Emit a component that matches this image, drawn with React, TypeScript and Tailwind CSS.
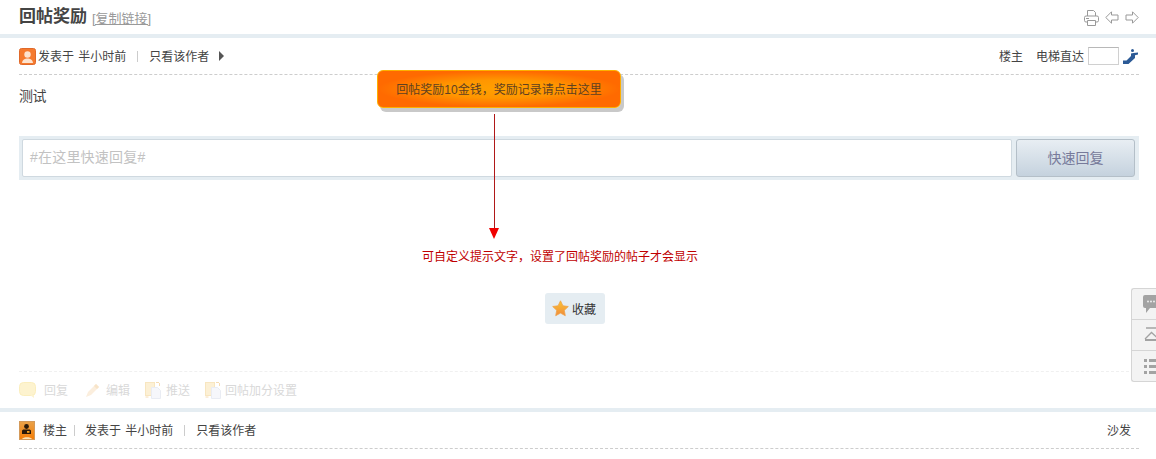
import React from "react";

const FONT = "font-['Liberation_Sans','Noto_Sans_CJK_SC',sans-serif]";

function UserIcon() {
  return (
    <svg width="17" height="17" viewBox="0 0 17 17" className="shrink-0">
      <rect x="0.5" y="0.5" width="16" height="16" rx="2" fill="#f57a2e" stroke="#e0692a" />
      <circle cx="8.5" cy="6.5" r="3.2" fill="#fde3cf" />
      <path d="M3 15c.5-3.5 3-4.5 5.500-4.500S13.500 11.500 14 15z" fill="#fde3cf" />
    </svg>
  );
}

function OwnerIcon() {
  return (
    <svg width="16" height="19" viewBox="0 0 16 19" className="shrink-0">
      <defs>
        <linearGradient id="owner" x1="0" y1="0" x2="0" y2="1">
          <stop offset="0" stopColor="#e9a24a" />
          <stop offset="1" stopColor="#f57d05" />
        </linearGradient>
      </defs>
      <rect x="0.5" y="0.5" width="15" height="18" fill="url(#owner)" stroke="#d49a5a" />
      <circle cx="7.500" cy="5.500" r="2.400" fill="#2a1a0a" />
      <path d="M3 13V10c0-1 1-1.500 2-1.500h5c1 0 2 .5 2 1.500v3z" fill="#2a1a0a" />
      <rect x="8" y="10" width="2.500" height="1.800" fill="#f5a020" />
      <path d="M3 18c1-2.500 9-2.500 10 0z" fill="#fbe3b8" />
    </svg>
  );
}

function ActionIcon({ kind }: { kind: "bubble" | "pen" | "doc" }) {
  if (kind === "bubble") {
    return (
      <svg width="17" height="17" viewBox="0 0 17 17">
        <rect x="0.500" y="0.500" width="16" height="13" rx="4" fill="#fdf3cf" stroke="#fbeebd" />
        <path d="M11 13l4 3v-3z" fill="#fdf3cf" />
      </svg>
    );
  }
  if (kind === "pen") {
    return (
      <svg width="16" height="16" viewBox="0 0 16 16">
        <path d="M1 15l2-5L11 2l3 3-8 8z" fill="#fbeedd" />
        <path d="M11 2l3 3-2 2-3-3z" fill="#f8e4c8" />
      </svg>
    );
  }
  return (
    <svg width="16" height="17" viewBox="0 0 16 17">
      <rect x="0.500" y="0.500" width="9" height="13" fill="#fcf0d5" stroke="#f8e6c0" />
      <path d="M6.500 5.500h6l3 3v8h-9z" fill="#f6f7fb" stroke="#e9ecf3" />
      <path d="M11 0.500h3M14.500 1v3M0.500 15h3" stroke="#f6dcb4" fill="none" />
    </svg>
  );
}

function SideTool() {
  return (
    <div className="absolute right-0 top-[288px] w-[25px] h-[94px] bg-[#f3f3f3] border border-r-0 border-[#d5d5d5] rounded-l-[3px] flex flex-col overflow-hidden">
      <div className="h-[31px] border-b border-[#d5d5d5] pl-[11px] pt-[6px]">
        <svg width="14" height="20" viewBox="0 0 14 20">
          <path d="M2 0h12v13H7l-4 5v-5H2a2 2 0 0 1-2-2V2a2 2 0 0 1 2-2z" fill="#a3a3a3" />
          <circle cx="5" cy="6.500" r="0.900" fill="#f3f3f3" />
          <circle cx="8" cy="6.500" r="0.900" fill="#f3f3f3" />
          <circle cx="11" cy="6.500" r="0.900" fill="#f3f3f3" />
        </svg>
      </div>
      <div className="h-[31px] border-b border-[#d5d5d5] pl-[12px] pt-[7px]">
        <svg width="13" height="16" viewBox="0 0 13 16">
          <path d="M2 1h11" stroke="#a3a3a3" strokeWidth="1.500" />
          <path d="M1 12L7.500 5.500l5.500 5" fill="none" stroke="#a3a3a3" strokeWidth="1.300" />
          <path d="M1 13h12" stroke="#a3a3a3" strokeWidth="1.800" />
        </svg>
      </div>
      <div className="flex-1 pl-[12px] pt-[8px]">
        <svg width="13" height="15" viewBox="0 0 13 15">
          <path d="M0 0h3v3H0zM5 0h8v3H5zM0 6h3v3H0zM5 6h8v3H5zM0 12h3v3H0zM5 12h8v3H5z" fill="#a3a3a3" />
        </svg>
      </div>
    </div>
  );
}

function TipAnnotation() {
  return (
    <>
      {/* orange popup */}
      <div className="absolute left-[377px] top-[70px] w-[244px] h-[38px] pt-[1px] rounded-[6px] border border-[#fdb000] shadow-[3px_4px_0_#c9c9c9] bg-[radial-gradient(ellipse_farthest-side_at_center,#ffa000_0%,#ff9600_50%,#ff6a00_100%)] flex items-center justify-center text-[12px] text-[#5f4020]">
        回帖奖励10金钱，奖励记录请点击这里
      </div>
      {/* red arrow */}
      <div className="absolute left-[494px] top-[114px] w-px h-[115px] bg-[#b01818]" />
      <div className="absolute left-[489px] top-[228px] w-0 h-0 border-x-[5.500px] border-x-transparent border-t-[11px] border-t-[#f00000]" />
      <div className="absolute left-[360px] top-[249px] w-[400px] text-center text-[12px] leading-[16px] text-[#c00000]">
        可自定义提示文字，设置了回帖奖励的帖子才会显示
      </div>
    </>
  );
}

export default function App() {
  return (
    <div className={`${FONT} relative w-[1156px] h-[459px] overflow-hidden bg-white text-[12px] text-[#444]`}>
      {/* title */}
      <div className="h-[34px] pl-[19px] pr-[17px] flex items-center">
        <h1 className="text-[17px] font-bold text-[#444] leading-[34px]">回帖奖励</h1>
        <a className="ml-[5px] mt-[3px] text-[13px] text-[#999] underline">[复制链接]</a>
        <div className="ml-auto flex items-center gap-[6px] mt-[1px]">
          <svg width="15" height="16" viewBox="0 0 15 16" fill="none" stroke="#999">
            <path d="M3.500 6V.5h6l2 2V6M3.500 12H2a1.500 1.500 0 0 1-1.500-1.500v-3A1.500 1.500 0 0 1 2 6h11a1.500 1.500 0 0 1 1.500 1.500v3A1.500 1.500 0 0 1 13 12h-1.500" />
            <path d="M3.500 10.500h8v5h-8zM2 8.500h3" />
          </svg>
          <svg width="14" height="13" viewBox="0 0 14 13" fill="none" stroke="#999">
            <path d="M6.500.8L.8 6.500l5.700 5.700V9H13V4H6.500z" />
          </svg>
          <svg width="14" height="13" viewBox="0 0 14 13" fill="none" stroke="#999">
            <path d="M7.500.8l5.700 5.700-5.700 5.700V9H1V4h6.500z" />
          </svg>
        </div>
      </div>
      <div className="h-[4px] bg-[#e5edf2]" />

      {/* first post head */}
      <div className="mx-[19px] w-[1120px] h-[37px] border-b border-dashed border-[#cdcdcd] flex items-center text-[#444] [word-spacing:1px]">
        <UserIcon />
        <span className="ml-[2px] pt-[2px]">发表于 半小时前</span>
        <span className="ml-[11px] w-px h-[11px] bg-[#ccc]" />
        <span className="ml-[11px] pt-[2px]">只看该作者</span>
        <span className="ml-[10px] w-0 h-0 border-y-[5px] border-y-transparent border-l-[5px] border-l-[#555]" />
        <span className="ml-auto pt-[2px]">楼主</span>
        <span className="ml-[13px] pt-[2px]">电梯直达</span>
        <span className="ml-[4px] w-[31px] h-[18px] border border-[#d0d0d0] border-t-[#b8b8b8] bg-white" />
        <svg width="16" height="15" viewBox="0 0 16 15" className="ml-[4px]">
          <circle cx="9.500" cy="1.500" r="1.500" fill="#2b5a96" />
          <path d="M0 11.500h3.500L8 7V4.500L10.500 4l4.500-.5v2l-3 .8V9l-6.500 6H0z" fill="#2b5a96" />
        </svg>
      </div>

      <div className="mx-[19px] h-[61px] pt-[13px] text-[14px] leading-[16px] text-[#444] tracking-[-0.5px]">测试</div>

      {/* quick reply */}
      <div className="mx-[19px] w-[1120px] h-[44px] bg-[#e5edf2] p-[3px] flex">
        <div className="w-[990px] h-[38px] bg-white border border-[#cfd9e0] rounded-[2px] text-[14px] leading-[35px] tracking-[0.2px] text-[#c2c2c2] pl-[7px]">
          #在这里快速回复#
        </div>
        <button className="ml-[4px] w-[119px] h-[38px] rounded-[3px] border border-[#b4bfc8] bg-gradient-to-b from-[#e8eef3] to-[#c5d2de] text-[14px] text-[#777a9a]">
          快速回复
        </button>
      </div>

      {/* favourite */}
      <div className="h-[191px] pt-[113px] flex justify-center">
        <button className="ml-[-6px] w-[60px] h-[31px] rounded-[3px] bg-[#e5edf2] flex items-center pl-[7px] text-[12px] text-[#333]">
          <svg width="17" height="17" viewBox="0 0 17 17">
            <defs>
              <linearGradient id="star" x1="0" y1="0" x2="0" y2="1">
                <stop offset="0" stopColor="#fbc531" />
                <stop offset="1" stopColor="#f08a3c" />
              </linearGradient>
            </defs>
            <path d="M8.500.8l2.400 5 5.400.7-4 3.800 1 5.400-4.800-2.600-4.800 2.600 1-5.400-4-3.800 5.400-.7z" fill="url(#star)" stroke="#eda24a" strokeWidth="0.800" strokeLinejoin="round" />
          </svg>
          <span className="ml-[3px] pt-[2px]">收藏</span>
        </button>
      </div>

      {/* faded actions */}
      <div className="mx-[19px] w-[1120px] h-[37px] border-t border-dashed border-[#f0f0f0] flex items-center text-[#d9d9d9]">
        <ActionIcon kind="bubble" />
        <span className="ml-[8px] pt-[2px]">回复</span>
        <span className="ml-[17px]"><ActionIcon kind="pen" /></span>
        <span className="ml-[5px] pt-[2px]">编辑</span>
        <span className="ml-[15px]"><ActionIcon kind="doc" /></span>
        <span className="ml-[5px] pt-[2px]">推送</span>
        <span className="ml-[15px]"><ActionIcon kind="doc" /></span>
        <span className="ml-[4px] pt-[2px]">回帖加分设置</span>
      </div>
      <div className="h-[4px] bg-[#e5edf2]" />

      {/* second post head */}
      <div className="mx-[19px] w-[1120px] h-[37px] border-b border-dashed border-[#cdcdcd] flex items-center text-[#444] [word-spacing:1px]">
        <OwnerIcon />
        <span className="ml-[8px] pt-[2px]">楼主</span>
        <span className="ml-[7px] w-px h-[11px] bg-[#ccc]" />
        <span className="ml-[10px] pt-[2px]">发表于 半小时前</span>
        <span className="ml-[11px] w-px h-[11px] bg-[#ccc]" />
        <span className="ml-[11px] pt-[2px]">只看该作者</span>
        <span className="ml-auto mr-[8px] pt-[2px]">沙发</span>
      </div>

      <TipAnnotation />
      <SideTool />
    </div>
  );
}
